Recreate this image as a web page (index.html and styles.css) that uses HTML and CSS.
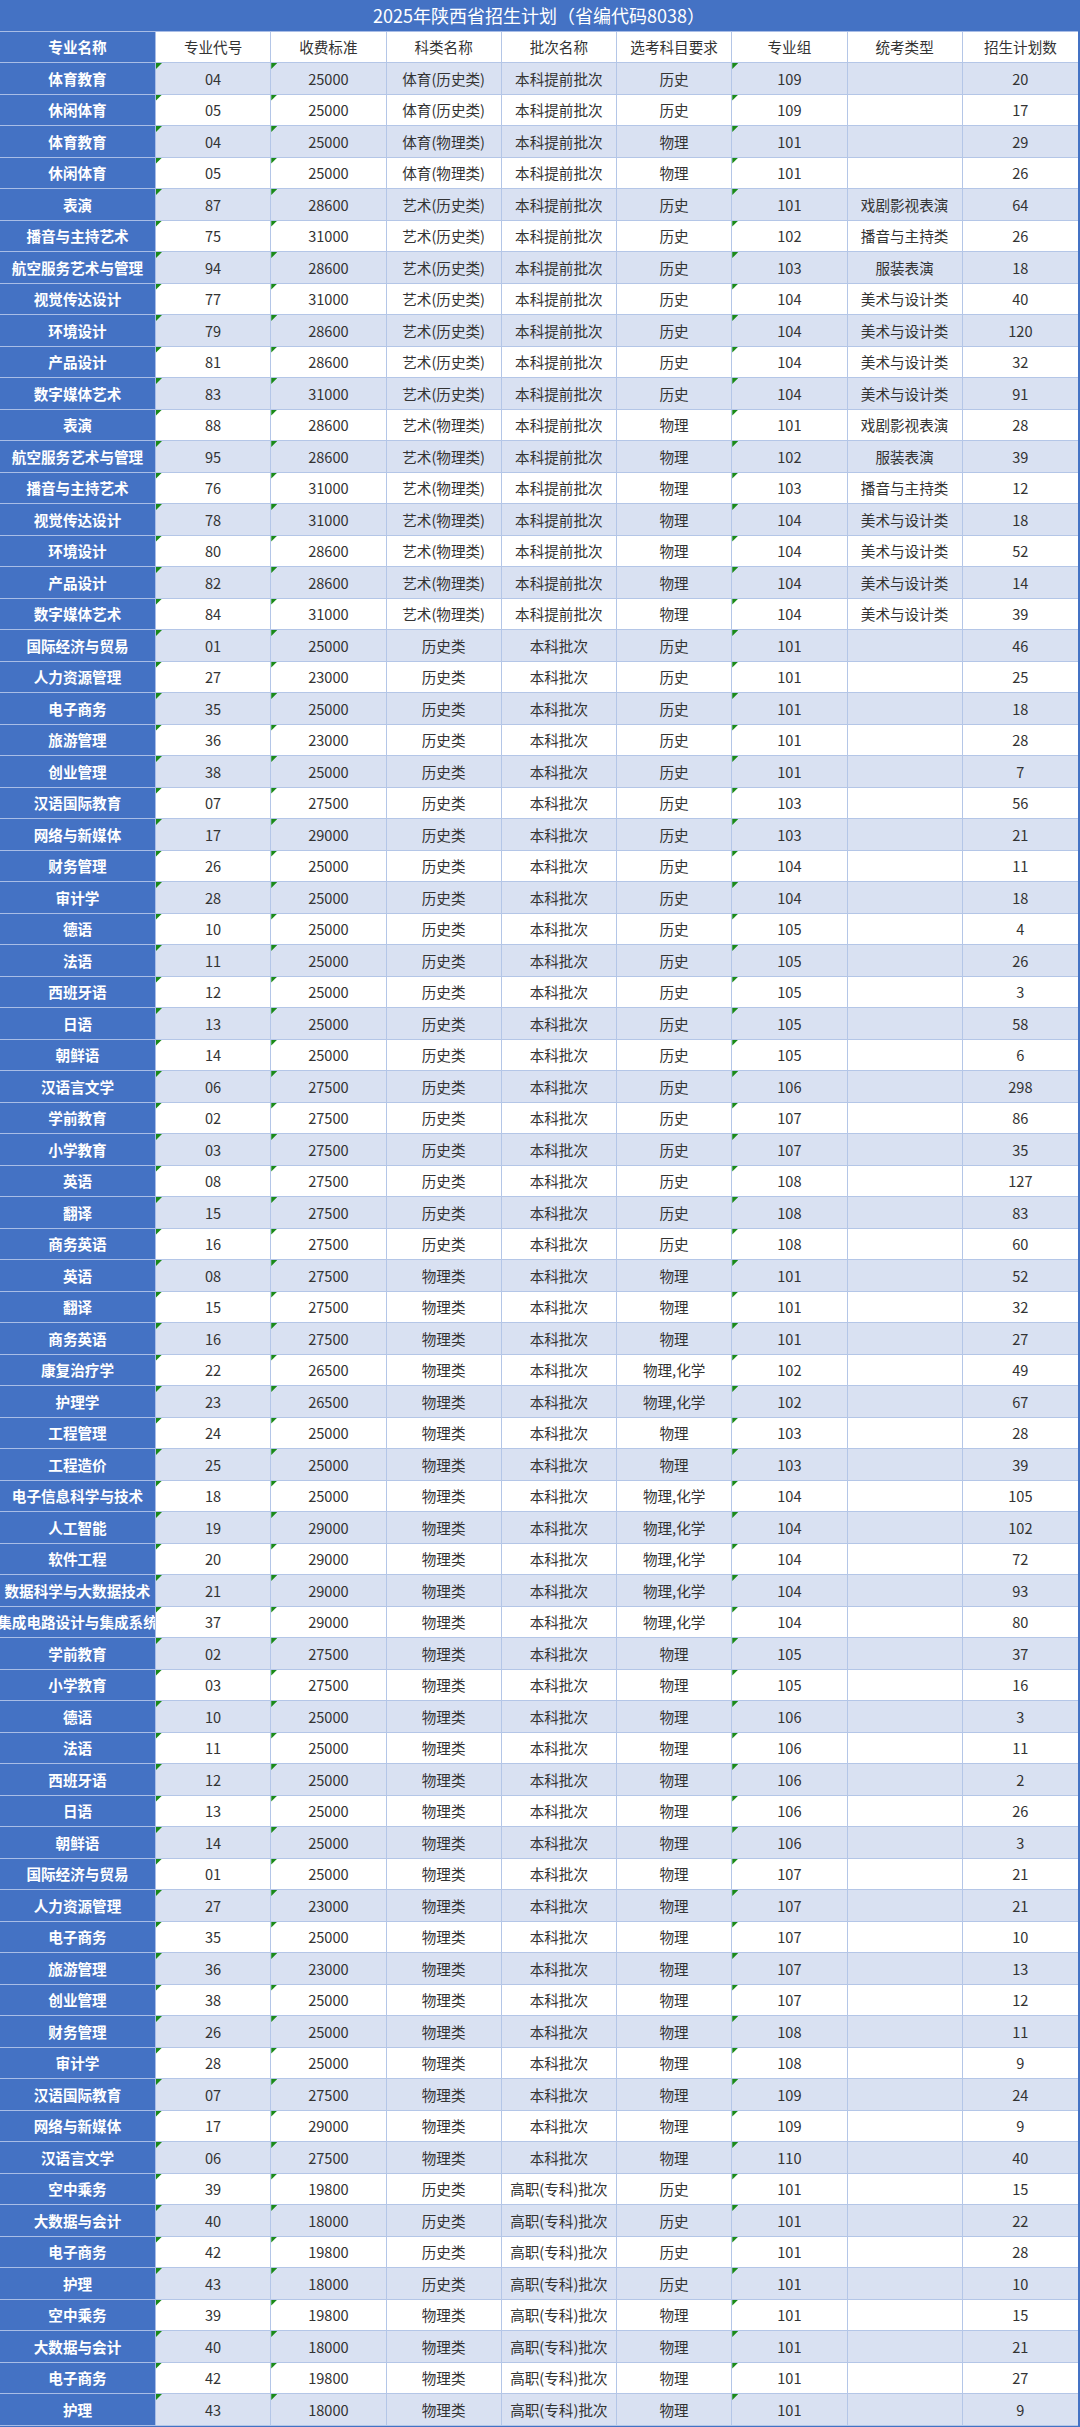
FILE: index.html
```html
<!DOCTYPE html>
<html lang="zh-CN">
<head>
<meta charset="utf-8">
<title>2025年陕西省招生计划</title>
<link rel="stylesheet" href="styles.css">
</head>
<body>
<div class="sheet">
<div class="title">2025年陕西省招生计划（省编代码8038）</div>
<div class="row head"><div class="c name">专业名称</div><div class="c">专业代号</div><div class="c">收费标准</div><div class="c">科类名称</div><div class="c">批次名称</div><div class="c">选考科目要求</div><div class="c">专业组</div><div class="c">统考类型</div><div class="c">招生计划数</div></div>
<div class="row alt"><div class="c name">体育教育</div><div class="c t">04</div><div class="c t">25000</div><div class="c">体育(历史类)</div><div class="c">本科提前批次</div><div class="c">历史</div><div class="c t">109</div><div class="c"></div><div class="c">20</div></div>
<div class="row"><div class="c name">休闲体育</div><div class="c t">05</div><div class="c t">25000</div><div class="c">体育(历史类)</div><div class="c">本科提前批次</div><div class="c">历史</div><div class="c t">109</div><div class="c"></div><div class="c">17</div></div>
<div class="row alt"><div class="c name">体育教育</div><div class="c t">04</div><div class="c t">25000</div><div class="c">体育(物理类)</div><div class="c">本科提前批次</div><div class="c">物理</div><div class="c t">101</div><div class="c"></div><div class="c">29</div></div>
<div class="row"><div class="c name">休闲体育</div><div class="c t">05</div><div class="c t">25000</div><div class="c">体育(物理类)</div><div class="c">本科提前批次</div><div class="c">物理</div><div class="c t">101</div><div class="c"></div><div class="c">26</div></div>
<div class="row alt"><div class="c name">表演</div><div class="c t">87</div><div class="c t">28600</div><div class="c">艺术(历史类)</div><div class="c">本科提前批次</div><div class="c">历史</div><div class="c t">101</div><div class="c">戏剧影视表演</div><div class="c">64</div></div>
<div class="row"><div class="c name">播音与主持艺术</div><div class="c t">75</div><div class="c t">31000</div><div class="c">艺术(历史类)</div><div class="c">本科提前批次</div><div class="c">历史</div><div class="c t">102</div><div class="c">播音与主持类</div><div class="c">26</div></div>
<div class="row alt"><div class="c name">航空服务艺术与管理</div><div class="c t">94</div><div class="c t">28600</div><div class="c">艺术(历史类)</div><div class="c">本科提前批次</div><div class="c">历史</div><div class="c t">103</div><div class="c">服装表演</div><div class="c">18</div></div>
<div class="row"><div class="c name">视觉传达设计</div><div class="c t">77</div><div class="c t">31000</div><div class="c">艺术(历史类)</div><div class="c">本科提前批次</div><div class="c">历史</div><div class="c t">104</div><div class="c">美术与设计类</div><div class="c">40</div></div>
<div class="row alt"><div class="c name">环境设计</div><div class="c t">79</div><div class="c t">28600</div><div class="c">艺术(历史类)</div><div class="c">本科提前批次</div><div class="c">历史</div><div class="c t">104</div><div class="c">美术与设计类</div><div class="c">120</div></div>
<div class="row"><div class="c name">产品设计</div><div class="c t">81</div><div class="c t">28600</div><div class="c">艺术(历史类)</div><div class="c">本科提前批次</div><div class="c">历史</div><div class="c t">104</div><div class="c">美术与设计类</div><div class="c">32</div></div>
<div class="row alt"><div class="c name">数字媒体艺术</div><div class="c t">83</div><div class="c t">31000</div><div class="c">艺术(历史类)</div><div class="c">本科提前批次</div><div class="c">历史</div><div class="c t">104</div><div class="c">美术与设计类</div><div class="c">91</div></div>
<div class="row"><div class="c name">表演</div><div class="c t">88</div><div class="c t">28600</div><div class="c">艺术(物理类)</div><div class="c">本科提前批次</div><div class="c">物理</div><div class="c t">101</div><div class="c">戏剧影视表演</div><div class="c">28</div></div>
<div class="row alt"><div class="c name">航空服务艺术与管理</div><div class="c t">95</div><div class="c t">28600</div><div class="c">艺术(物理类)</div><div class="c">本科提前批次</div><div class="c">物理</div><div class="c t">102</div><div class="c">服装表演</div><div class="c">39</div></div>
<div class="row"><div class="c name">播音与主持艺术</div><div class="c t">76</div><div class="c t">31000</div><div class="c">艺术(物理类)</div><div class="c">本科提前批次</div><div class="c">物理</div><div class="c t">103</div><div class="c">播音与主持类</div><div class="c">12</div></div>
<div class="row alt"><div class="c name">视觉传达设计</div><div class="c t">78</div><div class="c t">31000</div><div class="c">艺术(物理类)</div><div class="c">本科提前批次</div><div class="c">物理</div><div class="c t">104</div><div class="c">美术与设计类</div><div class="c">18</div></div>
<div class="row"><div class="c name">环境设计</div><div class="c t">80</div><div class="c t">28600</div><div class="c">艺术(物理类)</div><div class="c">本科提前批次</div><div class="c">物理</div><div class="c t">104</div><div class="c">美术与设计类</div><div class="c">52</div></div>
<div class="row alt"><div class="c name">产品设计</div><div class="c t">82</div><div class="c t">28600</div><div class="c">艺术(物理类)</div><div class="c">本科提前批次</div><div class="c">物理</div><div class="c t">104</div><div class="c">美术与设计类</div><div class="c">14</div></div>
<div class="row"><div class="c name">数字媒体艺术</div><div class="c t">84</div><div class="c t">31000</div><div class="c">艺术(物理类)</div><div class="c">本科提前批次</div><div class="c">物理</div><div class="c t">104</div><div class="c">美术与设计类</div><div class="c">39</div></div>
<div class="row alt"><div class="c name">国际经济与贸易</div><div class="c t">01</div><div class="c t">25000</div><div class="c">历史类</div><div class="c">本科批次</div><div class="c">历史</div><div class="c t">101</div><div class="c"></div><div class="c">46</div></div>
<div class="row"><div class="c name">人力资源管理</div><div class="c t">27</div><div class="c t">23000</div><div class="c">历史类</div><div class="c">本科批次</div><div class="c">历史</div><div class="c t">101</div><div class="c"></div><div class="c">25</div></div>
<div class="row alt"><div class="c name">电子商务</div><div class="c t">35</div><div class="c t">25000</div><div class="c">历史类</div><div class="c">本科批次</div><div class="c">历史</div><div class="c t">101</div><div class="c"></div><div class="c">18</div></div>
<div class="row"><div class="c name">旅游管理</div><div class="c t">36</div><div class="c t">23000</div><div class="c">历史类</div><div class="c">本科批次</div><div class="c">历史</div><div class="c t">101</div><div class="c"></div><div class="c">28</div></div>
<div class="row alt"><div class="c name">创业管理</div><div class="c t">38</div><div class="c t">25000</div><div class="c">历史类</div><div class="c">本科批次</div><div class="c">历史</div><div class="c t">101</div><div class="c"></div><div class="c">7</div></div>
<div class="row"><div class="c name">汉语国际教育</div><div class="c t">07</div><div class="c t">27500</div><div class="c">历史类</div><div class="c">本科批次</div><div class="c">历史</div><div class="c t">103</div><div class="c"></div><div class="c">56</div></div>
<div class="row alt"><div class="c name">网络与新媒体</div><div class="c t">17</div><div class="c t">29000</div><div class="c">历史类</div><div class="c">本科批次</div><div class="c">历史</div><div class="c t">103</div><div class="c"></div><div class="c">21</div></div>
<div class="row"><div class="c name">财务管理</div><div class="c t">26</div><div class="c t">25000</div><div class="c">历史类</div><div class="c">本科批次</div><div class="c">历史</div><div class="c t">104</div><div class="c"></div><div class="c">11</div></div>
<div class="row alt"><div class="c name">审计学</div><div class="c t">28</div><div class="c t">25000</div><div class="c">历史类</div><div class="c">本科批次</div><div class="c">历史</div><div class="c t">104</div><div class="c"></div><div class="c">18</div></div>
<div class="row"><div class="c name">德语</div><div class="c t">10</div><div class="c t">25000</div><div class="c">历史类</div><div class="c">本科批次</div><div class="c">历史</div><div class="c t">105</div><div class="c"></div><div class="c">4</div></div>
<div class="row alt"><div class="c name">法语</div><div class="c t">11</div><div class="c t">25000</div><div class="c">历史类</div><div class="c">本科批次</div><div class="c">历史</div><div class="c t">105</div><div class="c"></div><div class="c">26</div></div>
<div class="row"><div class="c name">西班牙语</div><div class="c t">12</div><div class="c t">25000</div><div class="c">历史类</div><div class="c">本科批次</div><div class="c">历史</div><div class="c t">105</div><div class="c"></div><div class="c">3</div></div>
<div class="row alt"><div class="c name">日语</div><div class="c t">13</div><div class="c t">25000</div><div class="c">历史类</div><div class="c">本科批次</div><div class="c">历史</div><div class="c t">105</div><div class="c"></div><div class="c">58</div></div>
<div class="row"><div class="c name">朝鲜语</div><div class="c t">14</div><div class="c t">25000</div><div class="c">历史类</div><div class="c">本科批次</div><div class="c">历史</div><div class="c t">105</div><div class="c"></div><div class="c">6</div></div>
<div class="row alt"><div class="c name">汉语言文学</div><div class="c t">06</div><div class="c t">27500</div><div class="c">历史类</div><div class="c">本科批次</div><div class="c">历史</div><div class="c t">106</div><div class="c"></div><div class="c">298</div></div>
<div class="row"><div class="c name">学前教育</div><div class="c t">02</div><div class="c t">27500</div><div class="c">历史类</div><div class="c">本科批次</div><div class="c">历史</div><div class="c t">107</div><div class="c"></div><div class="c">86</div></div>
<div class="row alt"><div class="c name">小学教育</div><div class="c t">03</div><div class="c t">27500</div><div class="c">历史类</div><div class="c">本科批次</div><div class="c">历史</div><div class="c t">107</div><div class="c"></div><div class="c">35</div></div>
<div class="row"><div class="c name">英语</div><div class="c t">08</div><div class="c t">27500</div><div class="c">历史类</div><div class="c">本科批次</div><div class="c">历史</div><div class="c t">108</div><div class="c"></div><div class="c">127</div></div>
<div class="row alt"><div class="c name">翻译</div><div class="c t">15</div><div class="c t">27500</div><div class="c">历史类</div><div class="c">本科批次</div><div class="c">历史</div><div class="c t">108</div><div class="c"></div><div class="c">83</div></div>
<div class="row"><div class="c name">商务英语</div><div class="c t">16</div><div class="c t">27500</div><div class="c">历史类</div><div class="c">本科批次</div><div class="c">历史</div><div class="c t">108</div><div class="c"></div><div class="c">60</div></div>
<div class="row alt"><div class="c name">英语</div><div class="c t">08</div><div class="c t">27500</div><div class="c">物理类</div><div class="c">本科批次</div><div class="c">物理</div><div class="c t">101</div><div class="c"></div><div class="c">52</div></div>
<div class="row"><div class="c name">翻译</div><div class="c t">15</div><div class="c t">27500</div><div class="c">物理类</div><div class="c">本科批次</div><div class="c">物理</div><div class="c t">101</div><div class="c"></div><div class="c">32</div></div>
<div class="row alt"><div class="c name">商务英语</div><div class="c t">16</div><div class="c t">27500</div><div class="c">物理类</div><div class="c">本科批次</div><div class="c">物理</div><div class="c t">101</div><div class="c"></div><div class="c">27</div></div>
<div class="row"><div class="c name">康复治疗学</div><div class="c t">22</div><div class="c t">26500</div><div class="c">物理类</div><div class="c">本科批次</div><div class="c">物理,化学</div><div class="c t">102</div><div class="c"></div><div class="c">49</div></div>
<div class="row alt"><div class="c name">护理学</div><div class="c t">23</div><div class="c t">26500</div><div class="c">物理类</div><div class="c">本科批次</div><div class="c">物理,化学</div><div class="c t">102</div><div class="c"></div><div class="c">67</div></div>
<div class="row"><div class="c name">工程管理</div><div class="c t">24</div><div class="c t">25000</div><div class="c">物理类</div><div class="c">本科批次</div><div class="c">物理</div><div class="c t">103</div><div class="c"></div><div class="c">28</div></div>
<div class="row alt"><div class="c name">工程造价</div><div class="c t">25</div><div class="c t">25000</div><div class="c">物理类</div><div class="c">本科批次</div><div class="c">物理</div><div class="c t">103</div><div class="c"></div><div class="c">39</div></div>
<div class="row"><div class="c name">电子信息科学与技术</div><div class="c t">18</div><div class="c t">25000</div><div class="c">物理类</div><div class="c">本科批次</div><div class="c">物理,化学</div><div class="c t">104</div><div class="c"></div><div class="c">105</div></div>
<div class="row alt"><div class="c name">人工智能</div><div class="c t">19</div><div class="c t">29000</div><div class="c">物理类</div><div class="c">本科批次</div><div class="c">物理,化学</div><div class="c t">104</div><div class="c"></div><div class="c">102</div></div>
<div class="row"><div class="c name">软件工程</div><div class="c t">20</div><div class="c t">29000</div><div class="c">物理类</div><div class="c">本科批次</div><div class="c">物理,化学</div><div class="c t">104</div><div class="c"></div><div class="c">72</div></div>
<div class="row alt"><div class="c name">数据科学与大数据技术</div><div class="c t">21</div><div class="c t">29000</div><div class="c">物理类</div><div class="c">本科批次</div><div class="c">物理,化学</div><div class="c t">104</div><div class="c"></div><div class="c">93</div></div>
<div class="row"><div class="c name">集成电路设计与集成系统</div><div class="c t">37</div><div class="c t">29000</div><div class="c">物理类</div><div class="c">本科批次</div><div class="c">物理,化学</div><div class="c t">104</div><div class="c"></div><div class="c">80</div></div>
<div class="row alt"><div class="c name">学前教育</div><div class="c t">02</div><div class="c t">27500</div><div class="c">物理类</div><div class="c">本科批次</div><div class="c">物理</div><div class="c t">105</div><div class="c"></div><div class="c">37</div></div>
<div class="row"><div class="c name">小学教育</div><div class="c t">03</div><div class="c t">27500</div><div class="c">物理类</div><div class="c">本科批次</div><div class="c">物理</div><div class="c t">105</div><div class="c"></div><div class="c">16</div></div>
<div class="row alt"><div class="c name">德语</div><div class="c t">10</div><div class="c t">25000</div><div class="c">物理类</div><div class="c">本科批次</div><div class="c">物理</div><div class="c t">106</div><div class="c"></div><div class="c">3</div></div>
<div class="row"><div class="c name">法语</div><div class="c t">11</div><div class="c t">25000</div><div class="c">物理类</div><div class="c">本科批次</div><div class="c">物理</div><div class="c t">106</div><div class="c"></div><div class="c">11</div></div>
<div class="row alt"><div class="c name">西班牙语</div><div class="c t">12</div><div class="c t">25000</div><div class="c">物理类</div><div class="c">本科批次</div><div class="c">物理</div><div class="c t">106</div><div class="c"></div><div class="c">2</div></div>
<div class="row"><div class="c name">日语</div><div class="c t">13</div><div class="c t">25000</div><div class="c">物理类</div><div class="c">本科批次</div><div class="c">物理</div><div class="c t">106</div><div class="c"></div><div class="c">26</div></div>
<div class="row alt"><div class="c name">朝鲜语</div><div class="c t">14</div><div class="c t">25000</div><div class="c">物理类</div><div class="c">本科批次</div><div class="c">物理</div><div class="c t">106</div><div class="c"></div><div class="c">3</div></div>
<div class="row"><div class="c name">国际经济与贸易</div><div class="c t">01</div><div class="c t">25000</div><div class="c">物理类</div><div class="c">本科批次</div><div class="c">物理</div><div class="c t">107</div><div class="c"></div><div class="c">21</div></div>
<div class="row alt"><div class="c name">人力资源管理</div><div class="c t">27</div><div class="c t">23000</div><div class="c">物理类</div><div class="c">本科批次</div><div class="c">物理</div><div class="c t">107</div><div class="c"></div><div class="c">21</div></div>
<div class="row"><div class="c name">电子商务</div><div class="c t">35</div><div class="c t">25000</div><div class="c">物理类</div><div class="c">本科批次</div><div class="c">物理</div><div class="c t">107</div><div class="c"></div><div class="c">10</div></div>
<div class="row alt"><div class="c name">旅游管理</div><div class="c t">36</div><div class="c t">23000</div><div class="c">物理类</div><div class="c">本科批次</div><div class="c">物理</div><div class="c t">107</div><div class="c"></div><div class="c">13</div></div>
<div class="row"><div class="c name">创业管理</div><div class="c t">38</div><div class="c t">25000</div><div class="c">物理类</div><div class="c">本科批次</div><div class="c">物理</div><div class="c t">107</div><div class="c"></div><div class="c">12</div></div>
<div class="row alt"><div class="c name">财务管理</div><div class="c t">26</div><div class="c t">25000</div><div class="c">物理类</div><div class="c">本科批次</div><div class="c">物理</div><div class="c t">108</div><div class="c"></div><div class="c">11</div></div>
<div class="row"><div class="c name">审计学</div><div class="c t">28</div><div class="c t">25000</div><div class="c">物理类</div><div class="c">本科批次</div><div class="c">物理</div><div class="c t">108</div><div class="c"></div><div class="c">9</div></div>
<div class="row alt"><div class="c name">汉语国际教育</div><div class="c t">07</div><div class="c t">27500</div><div class="c">物理类</div><div class="c">本科批次</div><div class="c">物理</div><div class="c t">109</div><div class="c"></div><div class="c">24</div></div>
<div class="row"><div class="c name">网络与新媒体</div><div class="c t">17</div><div class="c t">29000</div><div class="c">物理类</div><div class="c">本科批次</div><div class="c">物理</div><div class="c t">109</div><div class="c"></div><div class="c">9</div></div>
<div class="row alt"><div class="c name">汉语言文学</div><div class="c t">06</div><div class="c t">27500</div><div class="c">物理类</div><div class="c">本科批次</div><div class="c">物理</div><div class="c t">110</div><div class="c"></div><div class="c">40</div></div>
<div class="row"><div class="c name">空中乘务</div><div class="c t">39</div><div class="c t">19800</div><div class="c">历史类</div><div class="c">高职(专科)批次</div><div class="c">历史</div><div class="c t">101</div><div class="c"></div><div class="c">15</div></div>
<div class="row alt"><div class="c name">大数据与会计</div><div class="c t">40</div><div class="c t">18000</div><div class="c">历史类</div><div class="c">高职(专科)批次</div><div class="c">历史</div><div class="c t">101</div><div class="c"></div><div class="c">22</div></div>
<div class="row"><div class="c name">电子商务</div><div class="c t">42</div><div class="c t">19800</div><div class="c">历史类</div><div class="c">高职(专科)批次</div><div class="c">历史</div><div class="c t">101</div><div class="c"></div><div class="c">28</div></div>
<div class="row alt"><div class="c name">护理</div><div class="c t">43</div><div class="c t">18000</div><div class="c">历史类</div><div class="c">高职(专科)批次</div><div class="c">历史</div><div class="c t">101</div><div class="c"></div><div class="c">10</div></div>
<div class="row"><div class="c name">空中乘务</div><div class="c t">39</div><div class="c t">19800</div><div class="c">物理类</div><div class="c">高职(专科)批次</div><div class="c">物理</div><div class="c t">101</div><div class="c"></div><div class="c">15</div></div>
<div class="row alt"><div class="c name">大数据与会计</div><div class="c t">40</div><div class="c t">18000</div><div class="c">物理类</div><div class="c">高职(专科)批次</div><div class="c">物理</div><div class="c t">101</div><div class="c"></div><div class="c">21</div></div>
<div class="row"><div class="c name">电子商务</div><div class="c t">42</div><div class="c t">19800</div><div class="c">物理类</div><div class="c">高职(专科)批次</div><div class="c">物理</div><div class="c t">101</div><div class="c"></div><div class="c">27</div></div>
<div class="row alt"><div class="c name">护理</div><div class="c t">43</div><div class="c t">18000</div><div class="c">物理类</div><div class="c">高职(专科)批次</div><div class="c">物理</div><div class="c t">101</div><div class="c"></div><div class="c">9</div></div>
</div>
</body>
</html>
```

FILE: styles.css
```css
html, body {
  margin: 0;
  padding: 0;
  background: #ffffff;
}

.sheet {
  width: 1080px;
  box-sizing: border-box;
  border-right: 2px solid #4472c4;
  border-bottom: 2px solid #4472c4;
  font-family: "Noto Sans CJK SC", "Noto Sans", sans-serif;
  font-size: 14.6px;
  color: #333333;
  display: flex;
  flex-direction: column;
}

.title {
  height: 31.6px;
  box-sizing: border-box;
  background: #4472c4;
  color: #ffffff;
  font-size: 18px;
  display: flex;
  align-items: center;
  justify-content: center;
  border-bottom: 1px solid #a9bde6;
}

.row {
  height: 31.5px;
  display: grid;
  grid-template-columns: 156px repeat(8, 1fr);
  background: #ffffff;
}

.row.alt {
  background: #d9e1f2;
}

.c {
  position: relative;
  box-sizing: border-box;
  border-right: 1px solid #b4c6e7;
  border-bottom: 1px solid #b4c6e7;
  display: flex;
  align-items: center;
  justify-content: center;
  white-space: nowrap;
  overflow: hidden;
  min-width: 0;
}

.c:last-child {
  border-right: none;
}

.c.name {
  background: #4472c4;
  color: #ffffff;
  font-weight: 700;
  border-right: 1px solid #a9bde6;
  border-bottom: 1px solid #a9bde6;
}

.c.t::before {
  content: "";
  position: absolute;
  left: 0;
  top: 0;
  width: 6px;
  height: 6px;
  background: #1a8a1a;
  clip-path: polygon(0 0, 100% 0, 0 100%);
}
```
